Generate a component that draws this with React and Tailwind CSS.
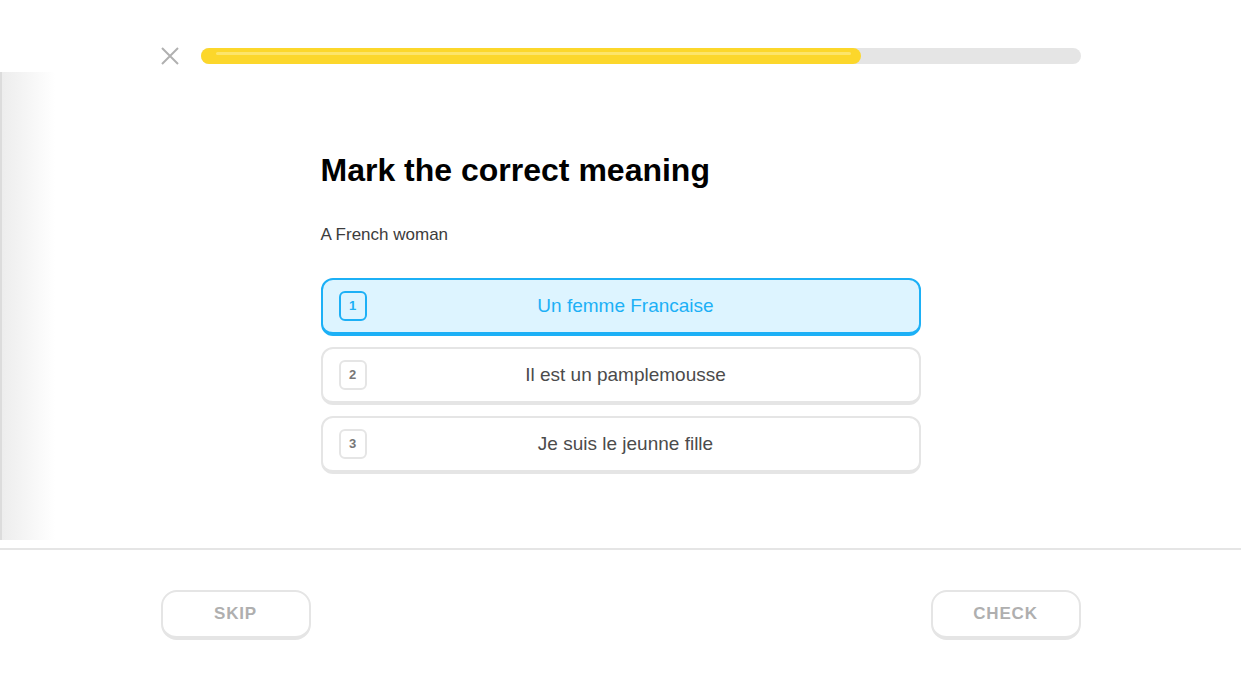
import { useState } from "react";

const options = [
  { id: 1, text: "Un femme Francaise" },
  { id: 2, text: "Il est un pamplemousse" },
  { id: 3, text: "Je suis le jeunne fille" },
];

export default function App() {
  const [selected, setSelected] = useState(1);

  return (
    <div
      className="relative w-[1241px] h-[690px] bg-white overflow-hidden"
      style={{ fontFamily: '"Liberation Sans", Arial, sans-serif' }}
    >
      {/* shadow of the side panel behind */}
      <div className="absolute left-0 top-[72px] w-[55px] h-[468px] bg-gradient-to-r from-[#ededed] via-[#f6f6f6] to-white border-l-2 border-[#dcdcdc]" />

      <div className="relative flex flex-col h-full">
        {/* progress header */}
        <div className="w-[920px] mx-auto pt-[47px] flex items-center gap-[22px]">
          <button className="w-[18px] h-[18px] flex items-center justify-center text-[#b0b0b0]">
            <svg width="18" height="18" viewBox="0 0 18 18" fill="none" stroke="currentColor" strokeWidth="2">
              <path d="M1 1L17 17M17 1L1 17" />
            </svg>
          </button>
          <div className="flex-1 h-4 rounded-full bg-[#e5e5e5] relative">
            <div className="h-4 w-[75%] rounded-full bg-[#fcd72b] relative">
              <div className="absolute left-[15px] right-[10px] top-[4px] h-[3px] rounded-full bg-[#fde56a]" />
            </div>
          </div>
        </div>

        {/* challenge */}
        <div className="w-[600px] mx-auto pt-[86px] flex-1">
          <h1 className="text-[32px] leading-[38px] font-bold text-black">Mark the correct meaning</h1>
          <p className="mt-[36px] text-[17px] leading-5 text-[#3c3c3c]">A French woman</p>
          <div className="mt-[33px] flex flex-col gap-[11px]">
            {options.map((o) => {
              const active = selected === o.id;
              return (
                <button
                  key={o.id}
                  onClick={() => setSelected(o.id)}
                  className={
                    active
                      ? "h-[58px] w-full flex items-center rounded-xl border-2 border-b-4 border-[#1cb0f6] bg-[#ddf4ff] pl-4 pr-4 text-left"
                      : "h-[58px] w-full flex items-center rounded-xl border-2 border-b-4 border-[#e5e5e5] bg-white pl-4 pr-4 text-left"
                  }
                >
                  <span
                    className={
                      active
                        ? "w-[28px] h-[30px] rounded-md border-2 border-[#1cb0f6] flex items-center justify-center text-[13px] font-bold text-[#1cb0f6]"
                        : "w-[28px] h-[30px] rounded-md border-2 border-[#e5e5e5] flex items-center justify-center text-[13px] font-bold text-[#777777]"
                    }
                  >
                    {o.id}
                  </span>
                  <span
                    className={
                      active
                        ? "flex-1 text-center text-[19px] text-[#1cb0f6] pr-[18px]"
                        : "flex-1 text-center text-[19px] text-[#4b4b4b] pr-[18px]"
                    }
                  >
                    {o.text}
                  </span>
                </button>
              );
            })}
          </div>
        </div>

        {/* footer */}
        <div className="h-[142px] border-t-2 border-[#e5e5e5]">
          <div className="w-[920px] mx-auto pt-[40px] flex justify-between">
            <button className="w-[150px] h-[50px] rounded-2xl border-2 border-b-4 border-[#e5e5e5] bg-white text-[17px] font-bold tracking-[0.8px] text-[#afafaf]">
              SKIP
            </button>
            <button className="w-[150px] h-[50px] rounded-2xl border-2 border-b-4 border-[#e5e5e5] bg-white text-[17px] font-bold tracking-[0.8px] text-[#afafaf]">
              CHECK
            </button>
          </div>
        </div>
      </div>
    </div>
  );
}
